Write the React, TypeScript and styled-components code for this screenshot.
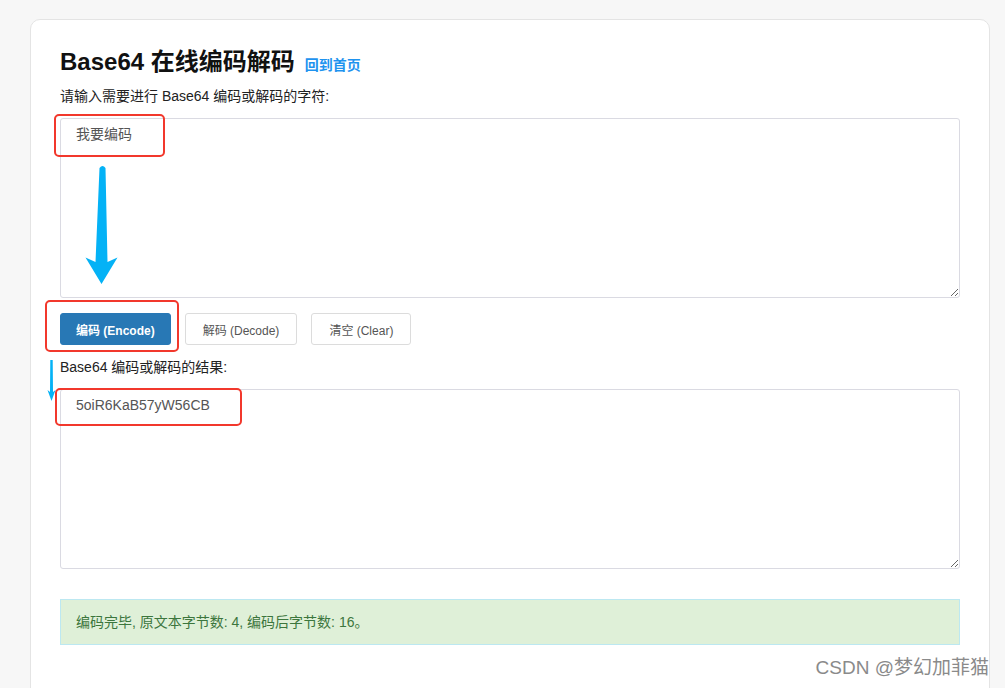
import { FC } from 'react';
import styled, { createGlobalStyle } from 'styled-components';

const GlobalStyle = createGlobalStyle`
  html, body {
    margin: 0;
    padding: 0;
    background: #f7f7f7;
    font-family: "Liberation Sans", "Noto Sans CJK SC", sans-serif;
    overflow: hidden;
  }
`;

const Page = styled.div`
  position: relative;
  width: 1005px;
  height: 688px;
  padding: 19px 0 0 30px;
  box-sizing: border-box;
`;

const Card = styled.div`
  width: 960px;
  box-sizing: border-box;
  background: #fff;
  border: 1px solid #e4e4e4;
  border-radius: 10px;
  padding: 26px 29px 60px;
`;

const TitleRow = styled.div`
  display: flex;
  align-items: baseline;
  gap: 10px;
`;

const Title = styled.h1`
  margin: 0;
  font-size: 24px;
  line-height: 32px;
  font-weight: bold;
  color: #111;
`;

const HomeLink = styled.a`
  font-size: 14px;
  font-weight: bold;
  color: #1e93ef;
  text-decoration: none;
`;

const Label = styled.div<{ $top: number }>`
  margin: ${(p) => p.$top}px 0 12px;
  font-size: 14px;
  line-height: 20px;
  color: #222;
`;

const TextBox = styled.textarea`
  display: block;
  width: 100%;
  height: 180px;
  box-sizing: border-box;
  margin: 0;
  border: 1px solid #dadae2;
  border-radius: 3px;
  padding: 5px 15px;
  font-family: inherit;
  font-size: 14px;
  line-height: 20px;
  color: #555;
  outline: none;
`;

const ButtonRow = styled.div`
  display: flex;
  gap: 14px;
  margin-top: 15px;
`;

const Button = styled.button<{ $primary?: boolean }>`
  height: 32px;
  padding: 0 ${(p) => (p.$primary ? 15 : 17)}px;
  border-radius: 3px;
  font-family: inherit;
  font-size: 12px;
  font-weight: ${(p) => (p.$primary ? 'bold' : 'normal')};
  color: ${(p) => (p.$primary ? '#fff' : '#555')};
  background: ${(p) => (p.$primary ? '#2878b5' : '#fff')};
  border: 1px solid ${(p) => (p.$primary ? '#2878b5' : '#dcdcdc')};
  cursor: pointer;
`;

const Alert = styled.div`
  margin-top: 30px;
  padding: 12px 15px;
  background: #dff0d8;
  border: 1px solid #bce8f1;
  font-size: 14px;
  line-height: 20px;
  color: #3c763d;
`;

// annotation overlays drawn on top of the screenshot
const Mark = styled.div<{ $x: number; $y: number; $w: number; $h: number }>`
  position: absolute;
  left: ${(p) => p.$x}px;
  top: ${(p) => p.$y}px;
  width: ${(p) => p.$w}px;
  height: ${(p) => p.$h}px;
  box-sizing: border-box;
  border: 2.5px solid #f2382c;
  border-radius: 5px;
  pointer-events: none;
`;

const Arrows = styled.svg`
  position: absolute;
  left: 0;
  top: 0;
  pointer-events: none;
`;

const Watermark = styled.div`
  position: absolute;
  right: 16px;
  top: 656px;
  font-size: 19px;
  line-height: 24px;
  color: #8a8a8a;
  text-shadow: 0 0 2px #fff;
`;

const marks = [
  { x: 54, y: 114, w: 111, h: 43 },
  { x: 45, y: 300, w: 134, h: 52 },
  { x: 55, y: 388, w: 187, h: 38 },
];

const App: FC = () => (
  <>
    <GlobalStyle />
    <Page>
      <Card>
        <TitleRow>
          <Title>Base64 在线编码解码</Title>
          <HomeLink href="#">回到首页</HomeLink>
        </TitleRow>
        <Label $top={8}>请输入需要进行 Base64 编码或解码的字符:</Label>
        <TextBox defaultValue="我要编码" />
        <ButtonRow>
          <Button $primary>编码 (Encode)</Button>
          <Button>解码 (Decode)</Button>
          <Button>清空 (Clear)</Button>
        </ButtonRow>
        <Label $top={12}>Base64 编码或解码的结果:</Label>
        <TextBox defaultValue="5oiR6KaB57yW56CB" />
        <Alert>编码完毕, 原文本字节数: 4, 编码后字节数: 16。</Alert>
      </Card>

      {marks.map((m, i) => (
        <Mark key={i} $x={m.x} $y={m.y} $w={m.w} $h={m.h} />
      ))}
      <Arrows width="1005" height="688" viewBox="0 0 1005 688">
        <path
          d="M99.5 168 Q102.5 164 105.5 168 L107.5 262 L117.5 257.5 L101.5 284 L85.5 257.5 L95.5 262 Z"
          fill="#04b2f6"
        />
        <path
          d="M50.3 360 L52.7 360 L53 392 L55.5 390 L51.5 401 L47.5 390 L50 392 Z"
          fill="#04b2f6"
        />
      </Arrows>
      <Watermark>CSDN @梦幻加菲猫</Watermark>
    </Page>
  </>
);

export default App;
